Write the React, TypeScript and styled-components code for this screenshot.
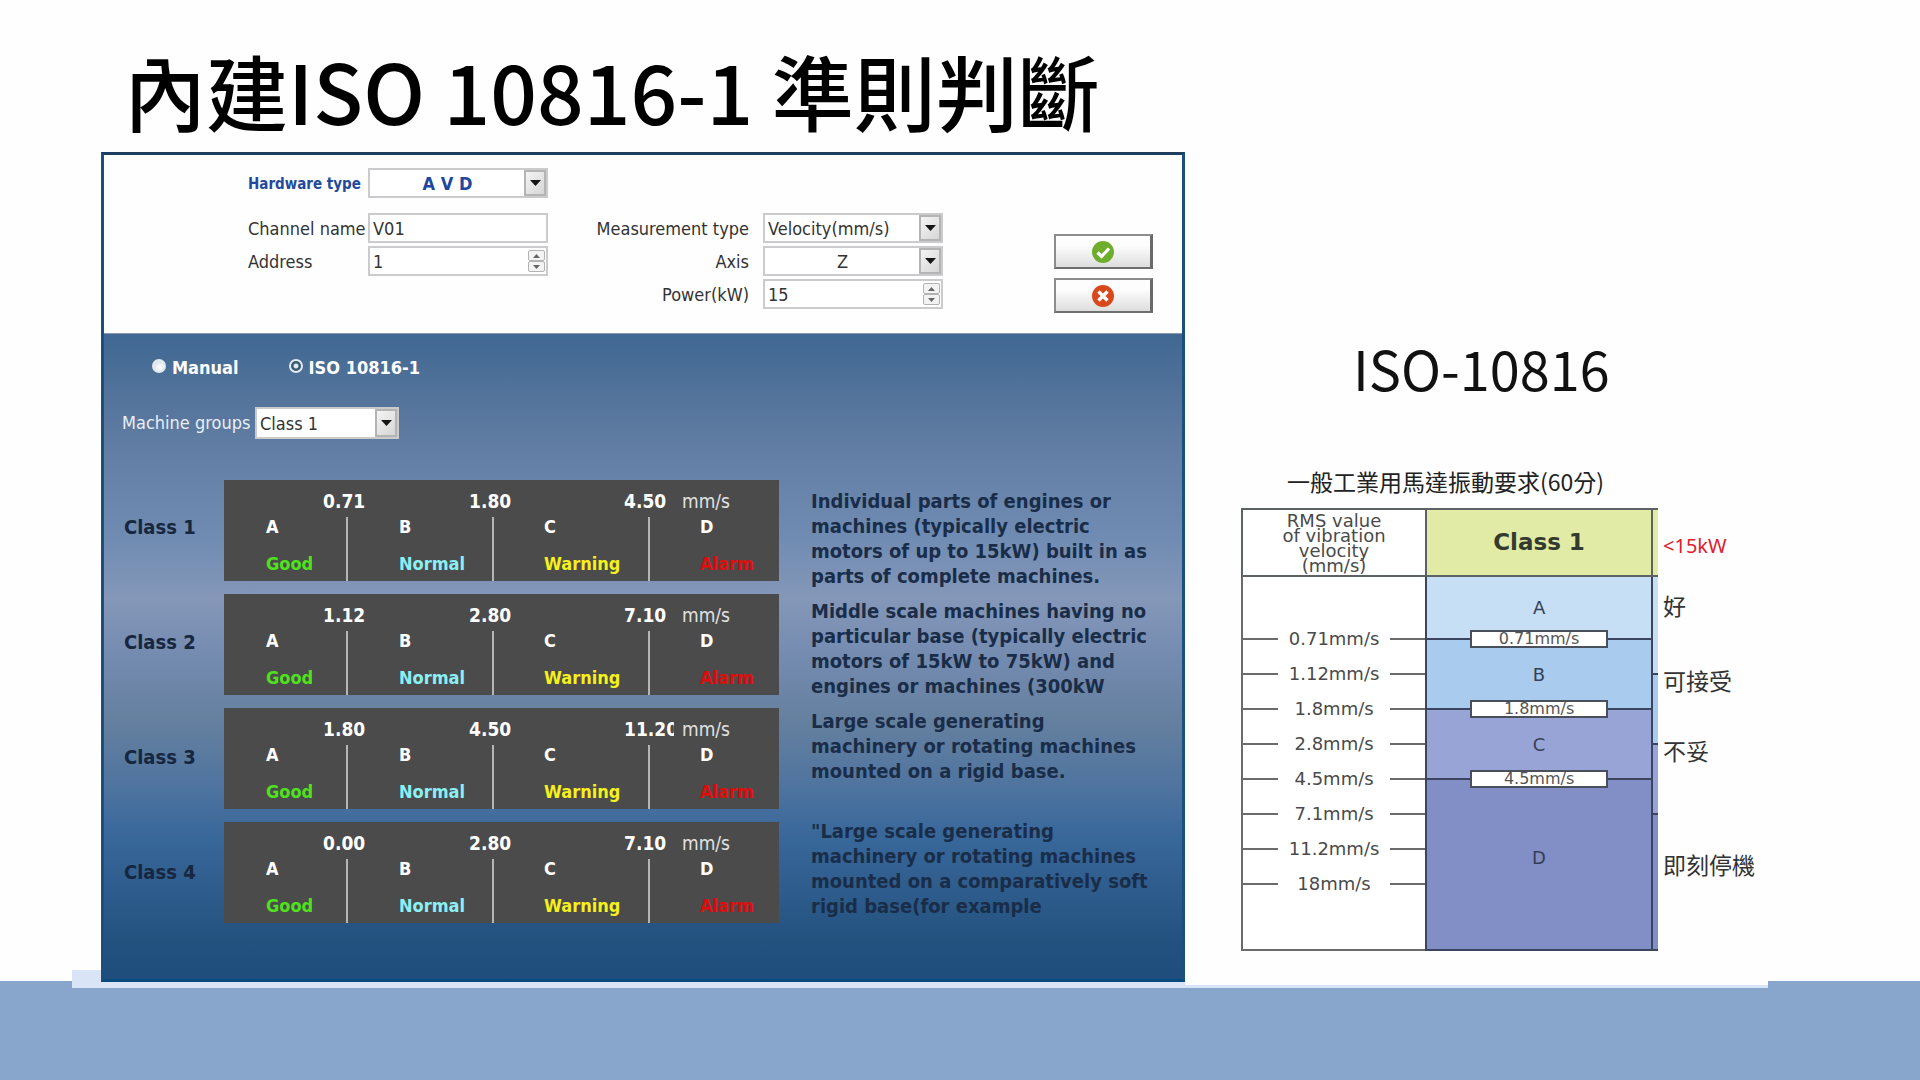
import React from "react";
import styled, { createGlobalStyle } from "styled-components";

const uiFont = '"DejaVu Sans Condensed", "Noto Sans", "Noto Sans CJK TC", sans-serif';
const cjkFont = '"Noto Sans CJK TC", sans-serif';
const wideFont = '"DejaVu Sans", sans-serif';

const GlobalStyle = createGlobalStyle`
  * { box-sizing: border-box; }
  body { margin: 0; background: #fff; font-family: ${uiFont}; }
  h1, h2, p { margin: 0; font-weight: 400; }
`;

/* ---------- slide ---------- */

const Slide = styled.main`
  min-height: 100vh;
  padding: 0 152px 92px 72px;
  background: linear-gradient(to top, #88a5cb 99px, #fefefe 99px);
`;

const Sheet = styled.div`
  background: #fefefe;
  border-bottom: 3px solid #d9e5f6;
`;

const Title = styled.h1`
  padding: 34px 0 0 52px;
  height: 152px;
  font: 500 82px/112px ${cjkFont};
  color: #000;
  white-space: nowrap;
`;

const Columns = styled.div`
  display: grid;
  grid-template-columns: 29px minmax(0, 1084fr) minmax(0, 569fr);
  padding-right: 14px;
`;

const Shade = styled.div`
  background: linear-gradient(to top, #d9e5f6 15px, transparent 15px);
`;

const PanelColumn = styled.div`
  padding-bottom: 3px;
  background: #d9e5f6;
`;

/* ---------- settings panel ---------- */

const Panel = styled.section`
  border: 3px solid #1b4f7e;
  border-top-color: #1d3e5e;
  border-bottom-color: #064a80;
  color: #fff;
`;

const SettingsForm = styled.form`
  display: flex;
  height: 179px;
  padding: 13px 29px 0 144px;
  background: #fefefe;
  border-bottom: 1px solid #8797ab;
`;

const FieldGroup = styled.div<{ $labels: number; $gap: number; $align: string }>`
  display: grid;
  grid-template-columns: ${(p) => p.$labels}px 180px;
  grid-auto-rows: 30px;
  gap: 3px ${(p) => p.$gap}px;
  align-content: start;
  text-align: ${(p) => p.$align};
`;

const HardwareGroup = styled(FieldGroup)`
  margin-bottom: 15px;
`;

const MeasureGroup = styled(FieldGroup)`
  margin: 45px 0 0 46px;
`;

const Label = styled.label<{ $strong?: boolean }>`
  font-size: ${(p) => (p.$strong ? 15 : 18)}px;
  line-height: 32px;
  font-weight: ${(p) => (p.$strong ? 700 : 400)};
  color: ${(p) => (p.$strong ? "#234a9c" : "#333")};
  white-space: nowrap;
`;

const Box = styled.span`
  position: relative;
  display: flex;
  align-items: center;
  border: 2px solid #cbcbce;
  background: #fff;
`;

const boxText = `
  flex: 1;
  min-width: 0;
  width: 100%;
  height: 100%;
  border: 0;
  padding: 0 0 0 3px;
  background: transparent;
  font-family: ${uiFont};
  font-size: 18px;
  color: #333;
  appearance: none;
  outline: none;
`;

const TextInput = styled.input`
  ${boxText}
  appearance: textfield;
  &::-webkit-inner-spin-button { appearance: none; }
`;

const SelectInput = styled.select<{ $centered?: boolean; $strong?: boolean }>`
  ${boxText}
  padding-right: ${(p) => (p.$centered ? 24 : 0)}px;
  text-align: ${(p) => (p.$centered ? "center" : "left")};
  color: ${(p) => (p.$strong ? "#20479f" : "#333")};
  font-weight: ${(p) => (p.$strong ? 700 : 400)};
`;

const ArrowCap = styled.span`
  position: absolute;
  right: 0;
  top: 0;
  bottom: 0;
  width: 22px;
  display: grid;
  place-items: center;
  border: 2px solid #b4b4b4;
  background: linear-gradient(135deg, #f4f4f4, #d6d6d6);
  pointer-events: none;
`;

const Steps = styled.span`
  display: grid;
  grid-template-rows: 11px 11px;
  width: 17px;
  margin-right: 1px;
`;

const StepButton = styled.button`
  display: grid;
  place-items: center;
  padding: 0;
  border: 1px solid #b3b3b3;
  border-radius: 2px;
  background: #f3f3f3;
`;

const Actions = styled.div`
  display: grid;
  grid-template-columns: 99px;
  grid-auto-rows: 35px;
  gap: 9px;
  margin: 66px 0 0 auto;
  align-content: start;
`;

const ActionButton = styled.button`
  display: grid;
  place-items: center;
  padding: 0;
  border: 2px solid #8c8c8c;
  border-right: 3px solid #6a6a6a;
  border-bottom-color: #6f6f6f;
  background: linear-gradient(#fdfdfd 30%, #dedede);
`;

/* ---------- machine area ---------- */

const MachineArea = styled.div`
  padding: 17px 20px 57px 18px;
  background: linear-gradient(
    #3f6892 0%, #56759c 11%, #6580a6 20%, #6f8bb2 31%, #8497b8 41%,
    #748bb0 50%, #65809f 60%, #4f749f 70%, #38679a 78%, #2d5b8b 87%, #23527f 94%, #1f4d7c 100%
  );
`;

const ModeRow = styled.div`
  display: flex;
  gap: 50px;
  padding-left: 30px;
  line-height: 34px;
  font-size: 18px;
  font-weight: 700;
`;

const ModeLabel = styled.label`
  display: flex;
  align-items: center;
  gap: 6px;
`;

const Radio = styled.input`
  appearance: none;
  width: 14px;
  height: 14px;
  margin: 0 0 4px;
  border: 2px solid #e2eaf2;
  border-radius: 50%;
  background: radial-gradient(circle at 60% 65%, #fff, #cfd8e2);
  &:checked { background: radial-gradient(#dfe8f0 0 2px, #35566f 3px); }
`;

const GroupRow = styled.div`
  display: grid;
  grid-template-columns: 128px 144px;
  gap: 5px;
  height: 31px;
  margin: 22px 0 42px;
`;

const GroupLabel = styled(Label)`
  color: #e8eef5;
`;

const Ratings = styled.div`
  display: grid;
  grid-template-columns: 102px minmax(0, 555fr) minmax(0, 383fr);
`;

const Stack = styled.div<{ $pitch: number; $left?: number; $top?: number }>`
  display: grid;
  grid-auto-rows: ${(p) => p.$pitch}px;
  align-content: start;
  padding: ${(p) => p.$top ?? 0}px 0 0 ${(p) => p.$left ?? 0}px;
  height: 442px;
`;

const ClassName = styled.h2`
  font-size: 20px;
  line-height: 26px;
  font-weight: 700;
  color: #16273f;
`;

const Meter = styled.article`
  height: 101px;
  padding-top: 8px;
  background: #4b4b4b;
`;

const Limits = styled.div`
  display: grid;
  grid-template-columns: 99fr 146fr 155fr 58fr 97fr;
  height: 29px;
  font-size: 19px;
  line-height: 26px;
  font-weight: 700;
`;

const Limit = styled.span`
  width: 50px;
  overflow: hidden;
`;

const Unit = styled.span`
  font-weight: 400;
  color: #e2e2e2;
`;

const Zones = styled.div`
  display: grid;
  grid-template-columns: 124fr 146fr 156fr 129fr;
  height: 64px;
`;

const Zone = styled.div<{ $color: string; $pad: number }>`
  display: flex;
  flex-direction: column;
  gap: 17px;
  padding-left: ${(p) => p.$pad}px;
  border-right: 2px solid #b5b5b5;
  font-size: 18px;
  line-height: 20px;
  font-weight: 700;
  color: ${(p) => p.$color};
  &:last-child { border-right: 0; }
`;

const Grade = styled.span`
  color: #fff;
`;

const Note = styled.p`
  font-size: 20px;
  line-height: 25px;
  font-weight: 700;
  color: #1a2d48;
  white-space: pre-line;
`;

/* ---------- ISO chart ---------- */

const Reference = styled.section`
  padding: 176px 0 32px 56px;
  background: #fefefe;
`;

const ReferenceTitle = styled.h2`
  padding-left: 112px;
  font: 400 54px/80px ${cjkFont};
  color: #111;
`;

const Caption = styled.p`
  padding: 54px 0 8px 46px;
  font: 23px/38px ${cjkFont};
  color: #222;
  white-space: nowrap;
`;

const Chart = styled.div`
  display: grid;
  grid-template-columns: minmax(0, 185fr) minmax(0, 227fr) 7px 96px;
  grid-template-rows: 69px 374px;
  font-family: ${wideFont};
  color: #4a4a4a;
`;

const HeadCell = styled.div<{ $fill?: string }>`
  display: grid;
  place-items: center;
  text-align: center;
  border: 2px solid #5d6265;
  border-right: 0;
  background: ${(p) => p.$fill ?? "#fff"};
  font-size: 18px;
  line-height: 15px;
  white-space: pre-line;
`;

const ClassCell = styled(HeadCell)`
  font-size: 23px;
  font-weight: 700;
  color: #333a30;
`;

const EdgeHead = styled.div`
  border: 2px solid #5d6265;
  border-right: 0;
  background: #e2eba6;
`;

const Scale = styled.div`
  padding-top: 44px;
  border: 2px solid #6b6b6b;
  border-width: 0 0 2px 2px;
  background: #fff;
`;

const ScaleRow = styled.div`
  display: grid;
  grid-template-columns: 35px 1fr 35px;
  align-items: center;
  height: 35px;
  font-size: 18px;
  text-align: center;
  &::before, &::after { content: ""; height: 2px; background: #6b6b6b; }
`;

const Bands = styled.div<{ $rows: string }>`
  display: grid;
  grid-template-rows: ${(p) => p.$rows};
  border: 2px solid #3c4560;
  border-width: 0 0 2px 2px;
`;

const Band = styled.div<{ $fill: string }>`
  position: relative;
  display: grid;
  place-items: center;
  background: ${(p) => p.$fill};
  border-bottom: 2px solid #3c4560;
  font-size: 18px;
  color: #343f58;
  &:last-child { border-bottom: 0; padding-bottom: 14px; }
`;

const Badge = styled.span`
  position: absolute;
  left: 19%;
  right: 19%;
  bottom: -10px;
  height: 18px;
  z-index: 1;
  border: 2px solid #4a4f5c;
  background: #fff;
  font-size: 16px;
  line-height: 14px;
  text-align: center;
  color: #555;
`;

const Verdicts = styled.div`
  grid-column: 4;
  grid-row: 1 / 3;
  display: grid;
  grid-template-rows: 75px 39px 75px 70px 114px;
  align-content: start;
  align-items: end;
  padding-left: 5px;
  font: 23px/34px ${cjkFont};
  color: #333;
  white-space: nowrap;
`;

const PowerLimit = styled.span`
  align-self: center;
  font: 20px/28px "Noto Sans", sans-serif;
  color: #e0202c;
`;

/* ---------- icons ---------- */

const DownIcon = () => (
  <svg width="11" height="6" viewBox="0 0 11 6" aria-hidden="true">
    <path d="M0 0h11L5.500 6z" fill="#151515" />
  </svg>
);

const StepIcon = ({ up }: { up?: boolean }) => (
  <svg width="7" height="4" viewBox="0 0 7 4" aria-hidden="true">
    <path d={up ? "M0 4h7L3.500 0z" : "M0 0h7L3.500 4z"} fill="#666" />
  </svg>
);

const AcceptIcon = () => (
  <svg width="24" height="24" viewBox="0 0 24 24" aria-hidden="true">
    <circle cx="12" cy="12" r="11" fill="#6fae2c" />
    <path d="M6.500 12.500l4 4 7.500-8" fill="none" stroke="#fff" strokeWidth="3.200" />
  </svg>
);

const CancelIcon = () => (
  <svg width="24" height="24" viewBox="0 0 24 24" aria-hidden="true">
    <circle cx="12" cy="12" r="11" fill="#d8481d" />
    <path d="M7.500 7.500l9 9M16.500 7.500l-9 9" fill="none" stroke="#fff" strokeWidth="3.400" />
  </svg>
);

/* ---------- pieces ---------- */

type SelectProps = { id: string; options: string[]; centered?: boolean; strong?: boolean };

const SelectBox = ({ id, options, centered, strong }: SelectProps) => (
  <Box>
    <SelectInput id={id} $centered={centered} $strong={strong} defaultValue={options[0]}>
      {options.map((o) => <option key={o}>{o}</option>)}
    </SelectInput>
    <ArrowCap><DownIcon /></ArrowCap>
  </Box>
);

const NumberBox = ({ id, initial }: { id: string; initial: number }) => {
  const [value, setValue] = React.useState(initial);
  return (
    <Box>
      <TextInput id={id} type="number" value={value} onChange={(e) => setValue(Number(e.target.value))} />
      <Steps>
        <StepButton type="button" aria-label="Increase" onClick={() => setValue(value + 1)}><StepIcon up /></StepButton>
        <StepButton type="button" aria-label="Decrease" onClick={() => setValue(value - 1)}><StepIcon /></StepButton>
      </Steps>
    </Box>
  );
};

const classes = [
  {
    name: "Class 1",
    limits: ["0.71", "1.80", "4.50"],
    note: "Individual parts of engines or\nmachines (typically electric\nmotors of up to 15kW) built in as\nparts of complete machines.",
  },
  {
    name: "Class 2",
    limits: ["1.12", "2.80", "7.10"],
    note: "Middle scale machines having no\nparticular base (typically electric\nmotors of 15kW to 75kW) and\nengines or machines (300kW",
  },
  {
    name: "Class 3",
    limits: ["1.80", "4.50", "11.20"],
    note: "Large scale generating\nmachinery or rotating machines\nmounted on a rigid base.",
  },
  {
    name: "Class 4",
    limits: ["0.00", "2.80", "7.10"],
    note: "\"Large scale generating\nmachinery or rotating machines\nmounted on a comparatively soft\nrigid base(for example",
  },
];

const zones = [
  { grade: "A", word: "Good", color: "#4fe01e", pad: 42 },
  { grade: "B", word: "Normal", color: "#8af0f5", pad: 51 },
  { grade: "C", word: "Warning", color: "#f6f01c", pad: 50 },
  { grade: "D", word: "Alarm", color: "#e00d0d", pad: 50 },
];

const scale = ["0.71mm/s", "1.12mm/s", "1.8mm/s", "2.8mm/s", "4.5mm/s", "7.1mm/s", "11.2mm/s", "18mm/s"];

const bands = [
  { grade: "A", fill: "#c6dff5", limit: "0.71mm/s" },
  { grade: "B", fill: "#a9cbee", limit: "1.8mm/s" },
  { grade: "C", fill: "#98a4d5", limit: "4.5mm/s" },
  { grade: "D", fill: "#828ec6", limit: "" },
];

export default function App() {
  return (
    <>
      <GlobalStyle />
      <Slide>
        <Sheet>
          <Title>內建ISO 10816-1 準則判斷</Title>
          <Columns>
            <Shade />
            <PanelColumn>
              <Panel>
                <SettingsForm onSubmit={(e) => e.preventDefault()}>
                  <div>
                    <HardwareGroup $labels={116} $gap={4} $align="left">
                      <Label htmlFor="hardware" $strong>Hardware type</Label>
                      <SelectBox id="hardware" options={["A V D"]} centered strong />
                    </HardwareGroup>
                    <FieldGroup $labels={116} $gap={4} $align="left">
                      <Label htmlFor="channel">Channel name</Label>
                      <Box><TextInput id="channel" defaultValue="V01" /></Box>
                      <Label htmlFor="address">Address</Label>
                      <NumberBox id="address" initial={1} />
                    </FieldGroup>
                  </div>
                  <MeasureGroup $labels={155} $gap={14} $align="right">
                    <Label htmlFor="measure">Measurement type</Label>
                    <SelectBox id="measure" options={["Velocity(mm/s)"]} />
                    <Label htmlFor="axis">Axis</Label>
                    <SelectBox id="axis" options={["Z", "X", "Y"]} centered />
                    <Label htmlFor="power">Power(kW)</Label>
                    <NumberBox id="power" initial={15} />
                  </MeasureGroup>
                  <Actions>
                    <ActionButton type="submit" aria-label="Accept"><AcceptIcon /></ActionButton>
                    <ActionButton type="button" aria-label="Cancel"><CancelIcon /></ActionButton>
                  </Actions>
                </SettingsForm>
                <MachineArea>
                  <ModeRow>
                    <ModeLabel><Radio type="radio" name="mode" />Manual</ModeLabel>
                    <ModeLabel><Radio type="radio" name="mode" defaultChecked />ISO 10816-1</ModeLabel>
                  </ModeRow>
                  <GroupRow>
                    <GroupLabel htmlFor="group">Machine groups</GroupLabel>
                    <SelectBox id="group" options={classes.map((c) => c.name)} />
                  </GroupRow>
                  <Ratings>
                    <Stack $pitch={115} $left={2} $top={34}>
                      {classes.map((c) => <ClassName key={c.name}>{c.name}</ClassName>)}
                    </Stack>
                    <Stack $pitch={114}>
                      {classes.map((c) => (
                        <Meter key={c.name}>
                          <Limits>
                            <span />
                            {c.limits.map((v) => <Limit key={v}>{v}</Limit>)}
                            <Unit>mm/s</Unit>
                          </Limits>
                          <Zones>
                            {zones.map((z) => (
                              <Zone key={z.grade} $color={z.color} $pad={z.pad}>
                                <Grade>{z.grade}</Grade>
                                <span>{z.word}</span>
                              </Zone>
                            ))}
                          </Zones>
                        </Meter>
                      ))}
                    </Stack>
                    <Stack $pitch={110} $left={32} $top={9}>
                      {classes.map((c) => <Note key={c.name}>{c.note}</Note>)}
                    </Stack>
                  </Ratings>
                </MachineArea>
              </Panel>
            </PanelColumn>
            <Reference>
              <ReferenceTitle>ISO-10816</ReferenceTitle>
              <Caption>一般工業用馬達振動要求(60分)</Caption>
              <Chart>
                <HeadCell>{"RMS value\nof vibration\nvelocity\n(mm/s)"}</HeadCell>
                <ClassCell $fill="#e2eba6">Class 1</ClassCell>
                <EdgeHead />
                <Scale>
                  {scale.map((s) => <ScaleRow key={s}>{s}</ScaleRow>)}
                </Scale>
                <Bands $rows="63px 70px 70px 1fr">
                  {bands.map((b) => (
                    <Band key={b.grade} $fill={b.fill}>
                      {b.grade}
                      {b.limit && <Badge>{b.limit}</Badge>}
                    </Band>
                  ))}
                </Bands>
                <Bands $rows="98px 70px 70px 1fr">
                  {bands.map((b) => <Band key={b.grade} $fill={b.fill} />)}
                </Bands>
                <Verdicts>
                  <PowerLimit>&lt;15kW</PowerLimit>
                  <span>好</span>
                  <span>可接受</span>
                  <span>不妥</span>
                  <span>即刻停機</span>
                </Verdicts>
              </Chart>
            </Reference>
          </Columns>
        </Sheet>
      </Slide>
    </>
  );
}
